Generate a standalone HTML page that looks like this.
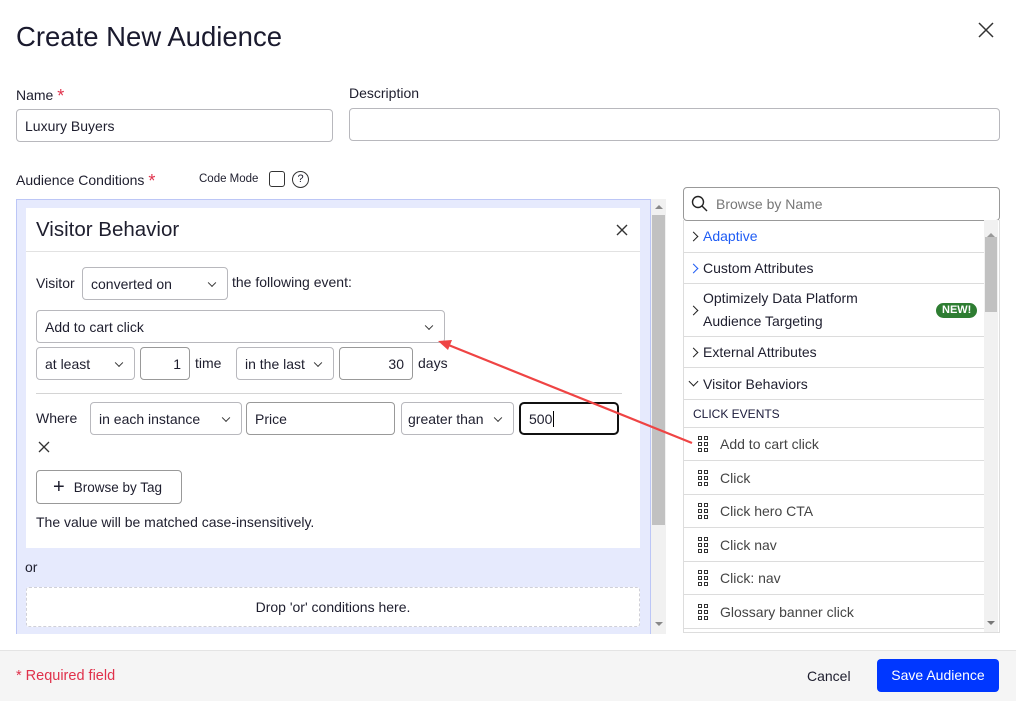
<!DOCTYPE html>
<html><head><style>
*{box-sizing:border-box;margin:0;padding:0}
body{width:1016px;height:701px;position:relative;background:#fff;font-family:"Liberation Sans",sans-serif;color:#1e1e2e;font-size:14px;overflow:hidden}
.a{position:absolute}
.in{position:absolute;border:1px solid #b8b8bd;border-radius:4px;background:#fff;padding-left:8px;display:flex;align-items:center;font-size:14px}
.sel::after{content:"";position:absolute;right:12px;top:50%;width:5px;height:5px;border-right:1.5px solid #333;border-bottom:1.5px solid #333;transform:translateY(-70%) rotate(45deg)}
.row{position:absolute;left:0;width:300px;border-bottom:1px solid #dcdcdc;display:flex;align-items:center;font-size:14px}
.chev{display:inline-block;width:7px;height:7px;border-right:1.3px solid #222;border-bottom:1.3px solid #222;transform:rotate(-45deg);margin:0 6px 0 6px}
.grid{display:inline-grid;grid-template-columns:4px 4px;gap:2px;margin:0 12px 0 14px}
.grid i{width:4px;height:4px;border:1px solid #333;display:block}
.st{color:#e0314b;font-size:18px;vertical-align:-2px}
</style></head><body>
<div class="a" style="left:16px;top:21px;font-size:27.5px;color:#1a1a2e">Create New Audience</div>
<svg class="a" style="left:977px;top:21px" width="18" height="18"><path d="M2 2L16 16M16 2L2 16" stroke="#333" stroke-width="1.5"/></svg>

<div class="a" style="left:16px;top:86px">Name <span class="st">*</span></div>
<div class="in" style="left:16px;top:109px;width:317px;height:33px">Luxury Buyers</div>
<div class="a" style="left:349px;top:85px">Description</div>
<div class="in" style="left:349px;top:108px;width:651px;height:33px"></div>

<div class="a" style="left:16px;top:171px">Audience Conditions <span class="st">*</span></div>
<div class="a" style="left:199px;top:173px;font-size:11.5px">Code Mode</div>
<div class="a" style="left:269px;top:171px;width:16px;height:16px;border:1.5px solid #333;border-radius:3px"></div>
<div class="a" style="left:292px;top:171px;width:17px;height:17px;border:1.5px solid #333;border-radius:50%;font-size:11px;text-align:center;line-height:14px">?</div>

<div class="a" style="left:16px;top:199px;width:635px;height:435px;background:#e6eafd;border:1px solid #bcc6f6;border-bottom:none"></div>
<div class="a" style="left:651px;top:199px;width:15px;height:435px;background:#f1f1f1"></div>
<div class="a" style="left:652px;top:215px;width:13px;height:310px;background:#c1c1c1"></div>
<div class="a" style="left:655px;top:205px;border:4px solid transparent;border-bottom:4px solid #888;border-top:none"></div>
<div class="a" style="left:655px;top:622px;border:4px solid transparent;border-top:4px solid #888;border-bottom:none"></div>

<div class="a" style="left:26px;top:208px;width:614px;height:340px;background:#fff"></div>
<div class="a" style="left:36px;top:218px;font-size:20.5px">Visitor Behavior</div>
<svg class="a" style="left:616px;top:224px" width="12" height="12"><path d="M1 1L11 11M11 1L1 11" stroke="#333" stroke-width="1.4"/></svg>
<div class="a" style="left:26px;top:251px;width:614px;border-top:1px solid #e2e2e2"></div>

<div class="a" style="left:36px;top:275px">Visitor</div>
<div class="in sel" style="left:82px;top:267px;width:146px;height:33px">converted on</div>
<div class="a" style="left:232px;top:274px">the following event:</div>
<div class="in sel" style="left:36px;top:310px;width:409px;height:33px">Add to cart click</div>
<div class="in sel" style="left:36px;top:347px;width:99px;height:33px">at least</div>
<div class="in" style="left:140px;top:347px;width:50px;height:33px;justify-content:flex-end;padding-right:8px;border-color:#999">1</div>
<div class="a" style="left:195px;top:355px">time</div>
<div class="in sel" style="left:236px;top:347px;width:98px;height:33px">in the last</div>
<div class="in" style="left:339px;top:347px;width:74px;height:33px;justify-content:flex-end;padding-right:8px;border-color:#999">30</div>
<div class="a" style="left:418px;top:355px">days</div>
<div class="a" style="left:36px;top:393px;width:586px;border-top:1px solid #d4d4d4"></div>

<div class="a" style="left:36px;top:410px">Where</div>
<div class="in sel" style="left:90px;top:402px;width:152px;height:33px">in each instance</div>
<div class="in" style="left:246px;top:402px;width:149px;height:33px;border-color:#999">Price</div>
<div class="in sel" style="left:401px;top:402px;width:113px;height:33px;padding-left:6px">greater than</div>
<div class="in" style="left:519px;top:402px;width:100px;height:33px;border:2px solid #111;border-radius:5px">500<span style="border-left:1px solid #000;height:16px;margin-left:1px"></span></div>
<svg class="a" style="left:38px;top:441px" width="12" height="12"><path d="M1 1L11 11M11 1L1 11" stroke="#333" stroke-width="1.3"/></svg>
<div class="in" style="left:36px;top:470px;width:146px;height:34px;border-color:#999;padding-left:16px;font-size:13.5px"><span style="font-size:20px;margin-right:9px;font-weight:300">+</span>Browse by Tag</div>
<div class="a" style="left:36px;top:514px">The value will be matched case-insensitively.</div>

<div class="a" style="left:25px;top:559px">or</div>
<div class="a" style="left:26px;top:587px;width:614px;height:40px;background:#fff;border:1px dashed #d0d0d8;border-radius:3px;text-align:center;line-height:38px;font-size:14px">Drop 'or' conditions here.</div>

<div class="a" style="left:683px;top:187px;width:317px;height:34px;border:1px solid #999;border-radius:4px;display:flex;align-items:center;padding-left:32px;color:#777">Browse by Name</div>
<svg class="a" style="left:691px;top:195px" width="18" height="18"><circle cx="7" cy="7" r="5.5" stroke="#222" stroke-width="1.4" fill="none"/><path d="M11 11L16 16" stroke="#222" stroke-width="1.4"/></svg>
<div class="a" style="left:683px;top:220px;width:317px;height:413px;border:1px solid #ddd;border-top:none;overflow:hidden">
 <div class="a" style="left:300px;top:0;width:14px;height:413px;background:#f1f1f1"></div>
 <div class="a" style="left:301px;top:17px;width:12px;height:75px;background:#c1c1c1"></div>
 <div class="a" style="left:303px;top:13px;border:4px solid transparent;border-bottom:4px solid #999;border-top:none"></div>
 <div class="a" style="left:303px;top:401px;border:4px solid transparent;border-top:4px solid #777;border-bottom:none"></div>
 <div class="row" style="top:0;height:33px;color:#1f5cf4"><span class="chev"></span>Adaptive</div>
 <div class="row" style="top:33px;height:31px"><span class="chev" style="border-color:#1f5cf4"></span>Custom Attributes</div>
 <div class="row" style="top:64px;height:53px;line-height:23px"><span class="chev"></span><span>Optimizely Data Platform<br>Audience Targeting</span><span style="position:absolute;left:252px;top:19px;background:#2e7d32;color:#fff;font-size:11px;font-weight:bold;border-radius:8px;padding:0 6px;line-height:15px">NEW!</span></div>
 <div class="row" style="top:117px;height:31px"><span class="chev"></span>External Attributes</div>
 <div class="row" style="top:148px;height:32px"><span class="chev" style="transform:rotate(45deg);margin-top:-4px"></span>Visitor Behaviors</div>
 <div class="row" style="top:180px;height:28px;font-size:12px;padding-left:9px;color:#1a1a3a">CLICK EVENTS</div>
 <div class="row" style="top:208px;height:33px;color:#444"><span class="grid"><i></i><i></i><i></i><i></i><i></i><i></i></span>Add to cart click</div>
 <div class="row" style="top:241px;height:34px;color:#444"><span class="grid"><i></i><i></i><i></i><i></i><i></i><i></i></span>Click</div>
 <div class="row" style="top:275px;height:33px;color:#444"><span class="grid"><i></i><i></i><i></i><i></i><i></i><i></i></span>Click hero CTA</div>
 <div class="row" style="top:308px;height:34px;color:#444"><span class="grid"><i></i><i></i><i></i><i></i><i></i><i></i></span>Click nav</div>
 <div class="row" style="top:342px;height:33px;color:#444"><span class="grid"><i></i><i></i><i></i><i></i><i></i><i></i></span>Click: nav</div>
 <div class="row" style="top:375px;height:34px;color:#444"><span class="grid"><i></i><i></i><i></i><i></i><i></i><i></i></span>Glossary banner click</div>
</div>

<svg class="a" style="left:0;top:0" width="1016" height="701"><path d="M692 443L446 344" stroke="#ef4444" stroke-width="2.2"/><path d="M438 341L452 340L448 350Z" fill="#ef4444"/></svg>

<div class="a" style="left:0;top:650px;width:1016px;height:51px;background:#f5f5f5;border-top:1px solid #e4e4e4"></div>
<div class="a" style="left:16px;top:668px;color:#e0314b;font-size:14.5px">* Required field</div>
<div class="a" style="left:807px;top:668px">Cancel</div>
<div class="a" style="left:877px;top:659px;width:122px;height:33px;background:#0037ff;color:#fff;border-radius:4px;text-align:center;line-height:33px">Save Audience</div>
</body></html>
